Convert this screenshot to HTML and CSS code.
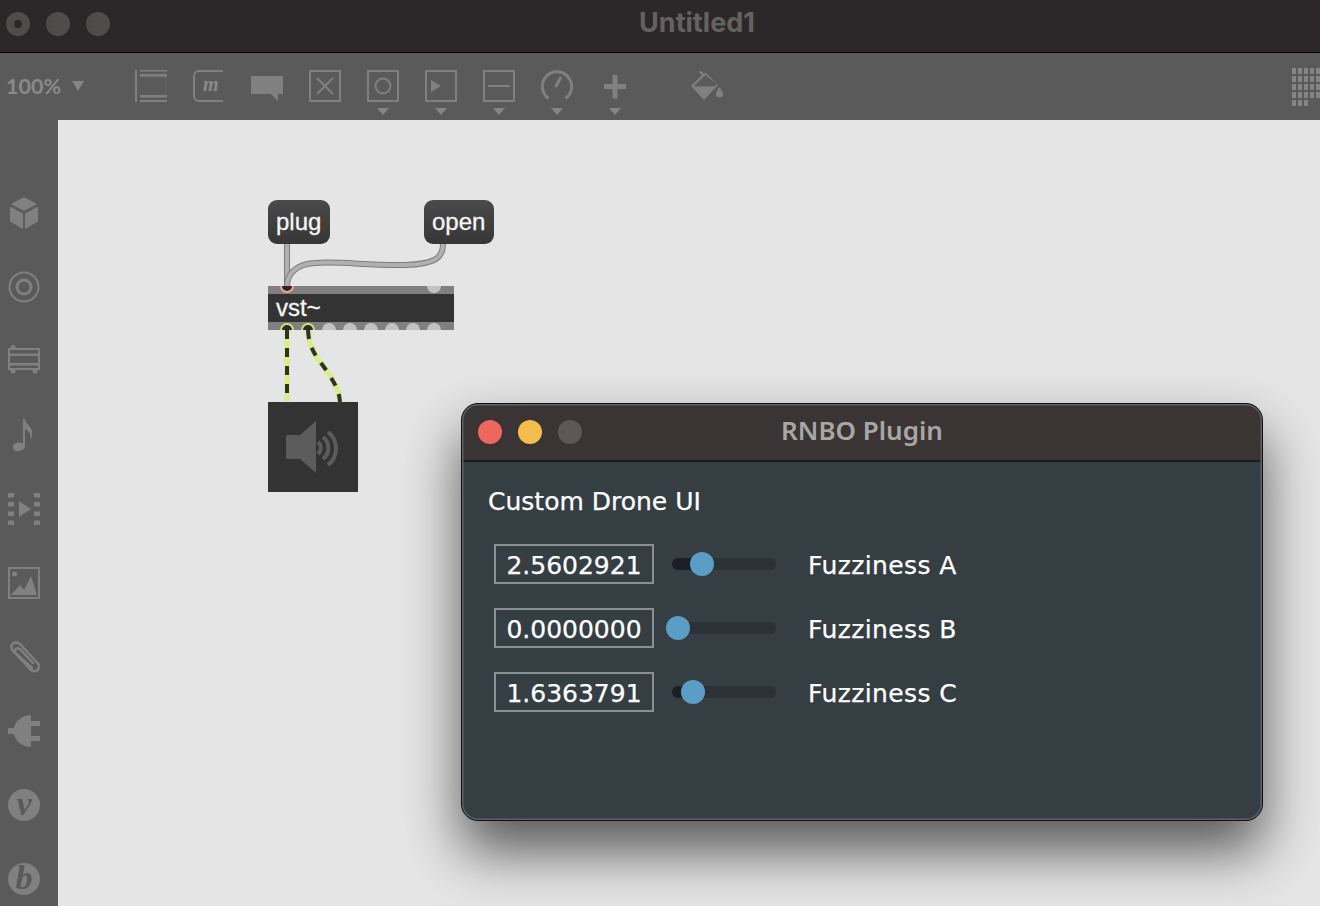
FILE: index.html
```html
<!DOCTYPE html>
<html lang="en">
<head>
<meta charset="utf-8">
<title>Untitled1</title>
<link rel="stylesheet" href="styles.css">
</head>
<body>
<div class="app">
  <header class="titlebar">
    <div class="lights">
      <span class="light light-close"></span>
      <span class="light"></span>
      <span class="light"></span>
    </div>
    <div class="app-title">Untitled1</div>
  </header>
  <div class="toolbar">
    <div class="zoom-control"><span>100%</span><i class="zoom-caret"></i></div>
    <div class="tools">
      <div class="tool"><svg viewBox="0 0 32 32"><path class="fill" d="M0 0h2v32H0zM5 0h27v1.500H5zM5 4h27v3H5zM5 25h27v2.500H5zM5 30h27v2H5z"/><path class="faint" d="M5 7h25.500v18"/></svg></div>
      <div class="tool"><svg viewBox="0 0 32 32"><path class="line" d="M30 1H6a5 5 0 0 0-5 5v20a5 5 0 0 0 5 5h24"/><text x="10" y="21" class="tool-m">m</text></svg></div>
      <div class="tool"><svg viewBox="0 0 32 32"><path class="fill" d="M0 6h32v18h-5v7l-7-7H0z"/></svg></div>
      <div class="tool"><svg viewBox="0 0 32 32"><path class="line" d="M1 1h30v30H1zM8 8l16 16M24 8L8 24"/></svg></div>
      <div class="tool has-caret"><svg viewBox="0 0 32 32"><path class="line" d="M1 1h30v30H1z"/><circle class="line" cx="16" cy="16" r="7.500"/></svg></div>
      <div class="tool has-caret"><svg viewBox="0 0 32 32"><path class="line" d="M1 1h30v30H1z"/><path class="fill" d="M6 10l10 6-10 6z"/></svg></div>
      <div class="tool has-caret"><svg viewBox="0 0 32 32"><path class="line" d="M1 1h30v30H1zM5 16h22"/></svg></div>
      <div class="tool has-caret"><svg viewBox="0 0 32 32"><path class="thick" d="M7.500 28.500A14.700 14.700 0 1 1 24.500 28.500M14.500 17L20 7"/></svg></div>
      <div class="tool has-caret"><svg viewBox="0 0 32 32"><path class="fill" d="M13.500 5h5v9H27v5h-8.500v9.500h-5V19H5v-5h8.500z"/></svg></div>
      <div class="tool tool-paint"><svg viewBox="0 0 32 32"><path class="fill" d="M0 16L11 5l-3-3 1.500-1.500L13 4l1.500-1.500L27 15 13 30zM3.500 16.500h20L26 14 14.500 5 4 15z"/><path class="fill" d="M28.500 17c2 3 3.500 5 3.500 7a3.300 3.300 0 0 1-7 0c0-2 1.500-4 3.500-7z"/></svg></div>
    </div>
    <div class="grid-button">
      <i></i><i></i><i></i><i></i><i></i>
      <i></i><i></i><i></i><i></i><i></i>
      <i></i><i></i><i></i><i></i><i></i>
      <i></i><i></i><i></i><i></i><i></i>
      <i></i><i></i><i></i>
    </div>
  </div>
  <div class="workspace">
    <aside class="sidebar">
      <svg viewBox="0 0 32 32"><path class="fill" d="M16 0l13 7-13 7L3 7zM2 9.500l13 7V32L2 24.500zM30 9.500V24.500L17 32V16.500z"/></svg>
      <svg viewBox="0 0 32 32"><circle class="line" cx="16" cy="16" r="14.500"/><circle class="thick" cx="16" cy="16" r="7"/></svg>
      <svg viewBox="0 0 32 32"><path class="line" d="M1 4h30v20H1z"/><path class="fill" d="M1 8.500h30V11H1zM1 18h30v2.500H1z"/><circle class="fill" cx="5" cy="2.500" r="2.500"/><circle class="fill" cx="5" cy="26" r="2.500"/><circle class="fill" cx="27" cy="26" r="2.500"/></svg>
      <svg viewBox="0 0 32 32"><path class="fill" d="M15 0h2c.5 4 3 5.500 5 8 2.500 3 3 7 1 12h-1c1-4 0-7.500-5-10v17c0 3-4 5-7.500 5S5 30 5 28c0-3.500 5-6 10-3.500z"/></svg>
      <svg viewBox="0 0 32 32"><path class="fill" d="M0 0h6v4.500H0zM0 9h6v4.500H0zM0 18.500h6V23H0zM0 27.500h6V32H0zM26 0h6v4.500h-6zM26 9h6v4.500h-6zM26 18.500h6V23h-6zM26 27.500h6V32h-6zM11 8l12 8-12 8z"/></svg>
      <svg viewBox="0 0 32 32"><path class="line" d="M1 1h30v30H1z"/><circle class="fill" cx="6.500" cy="7" r="2.500"/><path class="fill" d="M3 28l9-10 4 5 7-14 6 19z"/></svg>
      <svg viewBox="0 0 32 32"><path class="line paperclip" d="M24 27L5.500 10.500C2 7 3 4 5 2.500S10 1 13 4l17 18.500c2 3 1 5-.5 6.500s-4.500 2-7-.5L8 13C6 10.500 7 9 8 8s3-1 5 1l12 13"/></svg>
      <svg viewBox="0 0 32 32"><path class="fill" d="M0 13h6C7 6 15 0 23 0v32C15 32 7 26 6 19H0zM23 6h9v5h-9zM23 21h9v5h-9z"/></svg>
      <div class="letter-badge">v</div>
      <div class="letter-badge">b</div>
    </aside>
    <main class="canvas">
      <div class="message msg-plug">plug</div>
      <div class="message msg-open">open</div>
      <div class="vst">
        <div class="ports ports-in"><i class="port port-inlet"></i><i class="port"></i></div>
        <div class="vst-name">vst~</div>
        <div class="ports ports-out">
          <i class="port port-signal"></i><i class="port port-signal"></i><i class="port"></i><i class="port"></i><i class="port"></i><i class="port"></i><i class="port"></i><i class="port"></i>
        </div>
      </div>
      <div class="dac">
        <svg viewBox="0 0 90 90"><path class="speaker" d="M18 35a2 2 0 0 1 2-2h12L48 19v52L32 57H20a2 2 0 0 1-2-2z"/><path class="speaker-wave" d="M50 40a8 8 0 0 1 0 12M55 35a14 14 0 0 1 0 22M60 30a21 21 0 0 1 0 33"/></svg>
      </div>
      <svg class="wires" viewBox="58 120 1262 786">
        <path class="cord-edge" d="M287 244V286"/>
        <path class="cord" d="M287 244V286"/>
        <path class="cord-edge" d="M443 244C443 258 435 264 405 265C370 266 340 261 315 263C295 264 287 275 287 286"/>
        <path class="cord" d="M443 244C443 258 435 264 405 265C370 266 340 261 315 263C295 264 287 275 287 286"/>
        <path class="signal" d="M287 330V401"/>
        <path class="signal-dash" d="M287 330V401"/>
        <path class="signal" d="M308 330C309 352 320 360 328 373C335 384 339 390 340 402"/>
        <path class="signal-dash" d="M308 330C309 352 320 360 328 373C335 384 339 390 340 402"/>
      </svg>
      <section class="plugin">
        <header class="plugin-bar">
          <div class="plugin-lights">
            <span class="plugin-light red"></span>
            <span class="plugin-light yellow"></span>
            <span class="plugin-light gray"></span>
          </div>
          <div class="plugin-title">RNBO Plugin</div>
        </header>
        <div class="plugin-body">
          <h1 class="plugin-heading">Custom Drone UI</h1>
          <div class="param">
            <div class="number">2.5602921</div>
            <div class="slider"><div class="slider-fill" style="width:30px"></div><div class="slider-thumb"></div></div>
            <div class="param-label">Fuzziness A</div>
          </div>
          <div class="param">
            <div class="number">0.0000000</div>
            <div class="slider"><div class="slider-fill" style="width:6px"></div><div class="slider-thumb"></div></div>
            <div class="param-label">Fuzziness B</div>
          </div>
          <div class="param">
            <div class="number">1.6363791</div>
            <div class="slider"><div class="slider-fill" style="width:21px"></div><div class="slider-thumb"></div></div>
            <div class="param-label">Fuzziness C</div>
          </div>
        </div>
      </section>
    </main>
  </div>
</div>
</body>
</html>
```

FILE: styles.css
```css
* { box-sizing: border-box; }
html, body { margin: 0; padding: 0; height: 100%; overflow: hidden; }
body { font-family: "Liberation Sans", Arial, sans-serif; background: #e5e5e5; }

.app { width: 1320px; height: 906px; display: flex; flex-direction: column; overflow: hidden; }

.titlebar {
  height: 53px; flex: none; background: #2c2829; border-bottom: 1px solid #000;
  display: flex; align-items: center; position: relative; padding-left: 6px;
}
.lights { display: flex; gap: 16px; margin-top: -5px; }
.light { width: 24px; height: 24px; border-radius: 50%; background: #4f4c4c; display: flex; align-items: center; justify-content: center; }
.light-close::after { content: ""; width: 8px; height: 8px; border-radius: 50%; background: #2c2829; }
.app-title {
  position: absolute; left: 0; right: 0; top: 8px; padding-left: 74px; text-align: center;
  font: 700 27px/30px Inter, sans-serif; color: #646161;
}

.toolbar { height: 67px; flex: none; background: #5a5a5a; display: flex; align-items: flex-start; position: relative; }
.zoom-control { display: flex; align-items: center; gap: 11px; padding: 17px 0 0 6px; width: 135px; flex: none; }
.zoom-control span { font: 700 21.500px/32px Lato, sans-serif; color: #8a8a8a; }
.zoom-caret { width: 0; height: 0; border: 6px solid transparent; border-top: 10px solid #858585; border-bottom: 0; margin-top: -1px; }
.tools { display: flex; gap: 26px; padding-top: 17px; }
.tool { width: 32px; height: 32px; position: relative; flex: none; }
.tool svg { display: block; width: 32px; height: 32px; }
.tool.has-caret::after {
  content: ""; position: absolute; left: 10px; top: 38px; width: 0; height: 0;
  border: 6px solid transparent; border-top: 7px solid #858585; border-bottom: 0;
}
.tool-paint { margin-left: 34px; }
.tool-m { font: italic 700 20px "Liberation Serif", serif; fill: #8a8a8a; }
.grid-button {
  position: absolute; left: 1292px; top: 15px; width: 30px;
  display: grid; grid-template-columns: repeat(5, 4px); grid-auto-rows: 6px; gap: 2px;
}
.grid-button i { background: #858585; display: block; }

.fill { fill: #808080; }
.line { fill: none; stroke: #808080; stroke-width: 2; }
.thick { fill: none; stroke: #808080; stroke-width: 3; }
.faint { fill: none; stroke: #636363; stroke-width: 1; }
.paperclip { stroke-width: 2.500; stroke-linecap: round; }

.workspace { flex: 1; display: flex; min-height: 0; }
.sidebar {
  width: 58px; flex: none; background: #5a5a5a; display: flex; flex-direction: column;
  gap: 42px; padding: 77px 0 0 8px; overflow: hidden;
}
.sidebar svg { display: block; width: 32px; height: 32px; flex: none; }
.letter-badge {
  width: 32px; height: 32px; border-radius: 50%; background: #808080; color: #5a5a5a; flex: none;
  text-align: center; font: italic 700 34px/29px "Liberation Serif", serif;
}

.canvas { flex: 1; background: #e5e5e5; position: relative; overflow: hidden; }
.message {
  position: absolute; top: 80px; height: 44px; border-radius: 9px; color: #f5f5f5;
  background: linear-gradient(#4a4a4a, #363636); font: 24px/44px "Liberation Sans", Arial, sans-serif; padding-left: 8px;
  -webkit-text-stroke: .3px #f5f5f5;
}
.msg-plug { left: 210px; width: 62px; }
.msg-open { left: 366px; width: 70px; }

.vst { position: absolute; left: 210px; top: 166px; width: 186px; height: 44px; display: flex; flex-direction: column; background: #333; }
.ports { height: 8px; flex: none; background: #808080; display: flex; justify-content: space-between; padding: 0 13px 0 12px; overflow: hidden; }
.ports-in { align-items: flex-end; }
.ports-out { align-items: flex-start; }
.port { width: 14px; height: 14px; border-radius: 50%; background: #c2c2c2; flex: none; display: block; }
.ports-in .port { margin-top: -7px; margin-bottom: 1px; }
.ports-out .port { margin-top: 1px; }
.port-inlet { background: #2a2626; border: 2px solid #eba796; }
.port-signal { background: #2a2c26; border: 2px solid #d4e07c; }
.vst-name { flex: 1; color: #f5f5f5; font: 24px/28px "Liberation Sans", Arial, sans-serif; padding-left: 8px; -webkit-text-stroke: .3px #f5f5f5; }

.dac { position: absolute; left: 210px; top: 282px; width: 90px; height: 90px; background: #333; }
.dac svg { display: block; width: 90px; height: 90px; }
.speaker { fill: #5c5c5c; }
.speaker-wave { fill: none; stroke: #5c5c5c; stroke-width: 4; }

.wires { position: absolute; left: 0; top: 0; width: 1262px; height: 786px; pointer-events: none; }
.wires path { fill: none; }
.cord-edge { stroke: #7d7d7d; stroke-width: 6; }
.cord { stroke: #b0b0b0; stroke-width: 4; }
.signal { stroke: #d6ef8c; stroke-width: 5.500; }
.signal-dash { stroke: #2e3326; stroke-width: 4; stroke-dasharray: 9 9; }

.plugin {
  position: absolute; left: 403px; top: 283px; width: 802px; height: 418px; border-radius: 17px;
  background: #353e43; border: 1px solid #111; box-shadow: 0 30px 55px rgba(0, 0, 0, .62);
  overflow: hidden;
}
.plugin::after {
  content: ""; position: absolute; inset: 0; border-radius: 16px; box-shadow: inset 0 0 0 1.500px #5c6266; pointer-events: none;
}
.plugin-bar { height: 58px; background: #3a3434; border-bottom: 2px solid #1c1a1a; display: flex; align-items: center; position: relative; padding-left: 16px; }
.plugin-lights { display: flex; gap: 16px; }
.plugin-light { width: 24px; height: 24px; border-radius: 50%; }
.red { background: #ee675c; }
.yellow { background: #f4be4f; }
.gray { background: #5d5858; }
.plugin-title {
  position: absolute; left: 0; right: 0; top: 11px; text-align: center;
  font: 600 26px/30px "Noto Sans", sans-serif; color: #aaa6a6;
}
.plugin-body { padding: 24px 26px 0; }
.plugin-heading { margin: 0 0 26px; font: 400 25px/32px "DejaVu Sans", sans-serif; color: #fff; -webkit-text-stroke: .25px #fff; }
.param { display: flex; align-items: center; height: 40px; margin: 0 0 24px 6px; }
.number {
  width: 160px; height: 40px; flex: none; border: 2px solid #8a9195; color: #fff; text-align: center;
  font: 400 25px/39px "DejaVu Sans", sans-serif; -webkit-text-stroke: .25px #fff;
}
.slider { width: 104px; height: 12px; margin-left: 18px; flex: none; border-radius: 6px; background: #2a3238; display: flex; align-items: center; }
.slider-fill { height: 12px; border-radius: 6px 0 0 6px; background: #1a2023; flex: none; }
.slider-thumb { width: 24px; height: 24px; border-radius: 50%; background: #5a9ec6; flex: none; margin-left: -12px; }
.param-label { margin-left: 32px; padding-top: 3px; color: #fff; font: 400 25px/32px "DejaVu Sans", sans-serif; letter-spacing: .4px; -webkit-text-stroke: .25px #fff; }
```
